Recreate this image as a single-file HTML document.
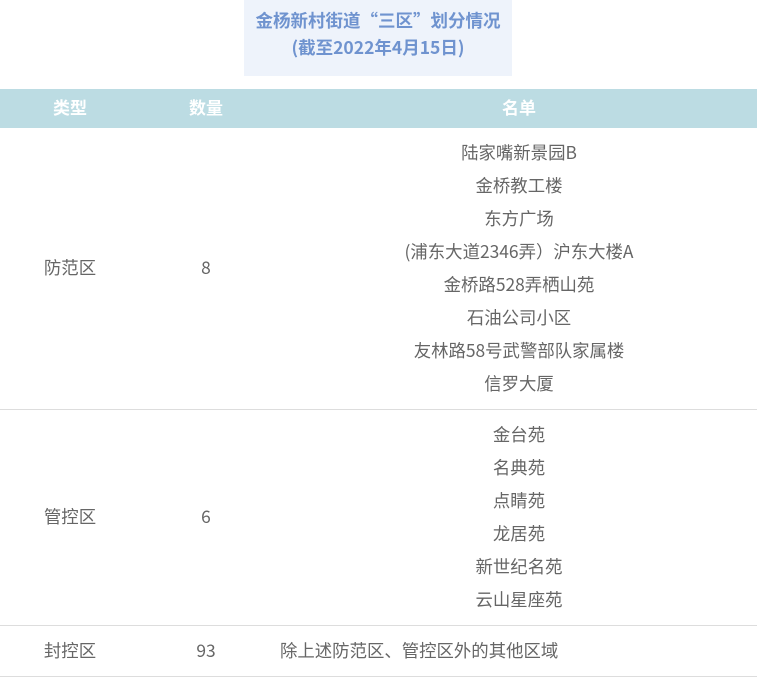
<!DOCTYPE html>
<html><head><meta charset="utf-8"><style>
body{margin:0;width:757px;height:680px;background:#fff;font-family:"Noto Sans CJK SC","Liberation Sans",sans-serif;position:relative;overflow:hidden}
.t{position:absolute;left:244px;top:0;width:268px;height:76px;background:#eef3fb;color:#6f93cf;font-weight:bold;font-size:17.5px;text-align:center;line-height:27px;padding-top:7px;box-sizing:border-box;white-space:nowrap}
.h{position:absolute;left:0;top:89px;width:757px;height:39px;background:#bcdce3;color:#fff;font-weight:bold;font-size:17px}
.c{position:absolute;text-align:center;color:#666;font-size:17.4px;line-height:24px}
.line{position:absolute;left:0;width:757px;height:1px;background:#ddd}
.list{position:absolute;left:280px;width:478px;text-align:center;color:#666;font-size:17.4px;line-height:33px}
</style></head><body>
<div class="t">金杨新村街道“三区”划分情况<br>(截至2022年4月15日)</div>
<div class="h">
<div class="c" style="left:20px;width:100px;top:6px;color:#fff;font-size:17px">类型</div>
<div class="c" style="left:156px;width:100px;top:6px;color:#fff;font-size:17px">数量</div>
<div class="c" style="left:280px;width:478px;top:6px;color:#fff;font-size:17px">名单</div>
</div>
<div class="list" style="top:136px">陆家嘴新景园B<br>金桥教工楼<br>东方广场<br>(浦东大道2346弄）沪东大楼A<br>金桥路528弄栖山苑<br>石油公司小区<br>友林路58号武警部队家属楼<br>信罗大厦</div>
<div class="c" style="left:20px;width:100px;top:256px">防范区</div>
<div class="c" style="left:156px;width:100px;top:256px">8</div>
<div class="line" style="top:409px"></div>
<div class="list" style="top:418px">金台苑<br>名典苑<br>点睛苑<br>龙居苑<br>新世纪名苑<br>云山星座苑</div>
<div class="c" style="left:20px;width:100px;top:505px">管控区</div>
<div class="c" style="left:156px;width:100px;top:505px">6</div>
<div class="line" style="top:625px"></div>
<div class="c" style="left:20px;width:100px;top:639px">封控区</div>
<div class="c" style="left:156px;width:100px;top:639px">93</div>
<div class="c" style="left:280px;top:639px;text-align:left;white-space:nowrap">除上述防范区、管控区外的其他区域</div>
<div class="line" style="top:676px"></div>
</body></html>
